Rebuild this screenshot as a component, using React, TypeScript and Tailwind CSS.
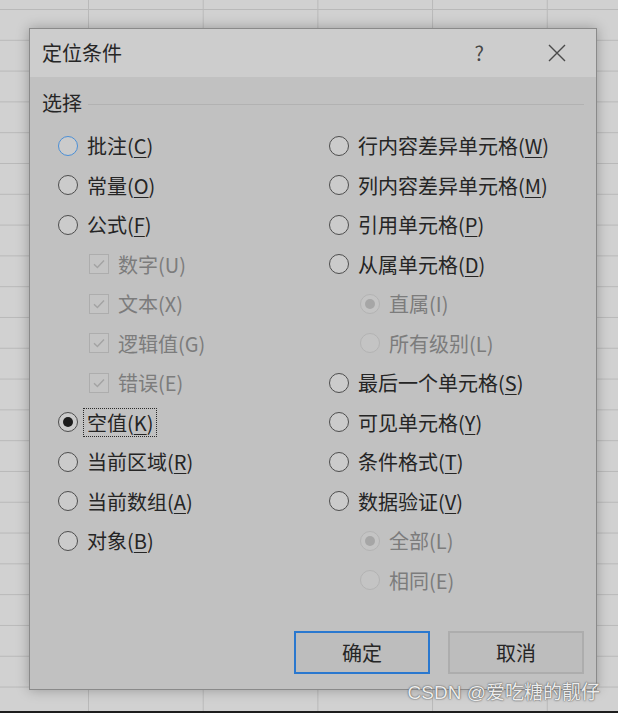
import React from 'react';

const FONT = '"Noto Sans CJK SC", "Noto Sans", sans-serif';

type Item = {
  label: string;
  key: string;
  kind: 'radio' | 'check';
  indent?: boolean;
  checked?: boolean;
  disabled?: boolean;
  hover?: boolean;
  focus?: boolean;
};

const leftItems: Item[] = [
  { label: '批注', key: 'C', kind: 'radio', hover: true },
  { label: '常量', key: 'O', kind: 'radio' },
  { label: '公式', key: 'F', kind: 'radio' },
  { label: '数字', key: 'U', kind: 'check', indent: true, checked: true, disabled: true },
  { label: '文本', key: 'X', kind: 'check', indent: true, checked: true, disabled: true },
  { label: '逻辑值', key: 'G', kind: 'check', indent: true, checked: true, disabled: true },
  { label: '错误', key: 'E', kind: 'check', indent: true, checked: true, disabled: true },
  { label: '空值', key: 'K', kind: 'radio', checked: true, focus: true },
  { label: '当前区域', key: 'R', kind: 'radio' },
  { label: '当前数组', key: 'A', kind: 'radio' },
  { label: '对象', key: 'B', kind: 'radio' },
];

const rightItems: Item[] = [
  { label: '行内容差异单元格', key: 'W', kind: 'radio' },
  { label: '列内容差异单元格', key: 'M', kind: 'radio' },
  { label: '引用单元格', key: 'P', kind: 'radio' },
  { label: '从属单元格', key: 'D', kind: 'radio' },
  { label: '直属', key: 'I', kind: 'radio', indent: true, checked: true, disabled: true },
  { label: '所有级别', key: 'L', kind: 'radio', indent: true, disabled: true },
  { label: '最后一个单元格', key: 'S', kind: 'radio' },
  { label: '可见单元格', key: 'Y', kind: 'radio' },
  { label: '条件格式', key: 'T', kind: 'radio' },
  { label: '数据验证', key: 'V', kind: 'radio' },
  { label: '全部', key: 'L', kind: 'radio', indent: true, checked: true, disabled: true },
  { label: '相同', key: 'E', kind: 'radio', indent: true, disabled: true },
];

function Radio({ checked, disabled, hover }: { checked?: boolean; disabled?: boolean; hover?: boolean }) {
  const border = disabled ? 'border-[#b3b3b3] bg-[#c4c4c4]' : hover ? 'border-[#4b8fd6] bg-[#cbcbcb]' : 'border-[#4d4d4d] bg-[#cbcbcb]';
  return (
    <span className={`w-[20px] h-[20px] rounded-full border-[1.5px] flex items-center justify-center shrink-0 ${border}`}>
      {checked && (
        <span className={`w-[10px] h-[10px] rounded-full ${disabled ? 'bg-[#a6a6a6]' : 'bg-[#1c1c1c]'}`} />
      )}
    </span>
  );
}

function Check({ checked }: { checked?: boolean }) {
  return (
    <span className="w-[20px] h-[20px] border border-[#adadad] bg-[#c4c4c4] flex items-center justify-center shrink-0">
      {checked && (
        <svg width="14" height="14" viewBox="0 0 14 14">
          <path d="M2 7.2 L5.4 10.6 L12 3.6" fill="none" stroke="#a3a3a3" strokeWidth="1.4" />
        </svg>
      )}
    </span>
  );
}

function Row({ item }: { item: Item }) {
  return (
    <div className={`h-[39.5px] flex items-center gap-[5px] ${item.indent ? 'pl-[31px]' : ''}`}>
      {item.kind === 'radio' ? (
        <Radio checked={item.checked} disabled={item.disabled} hover={item.hover} />
      ) : (
        <Check checked={item.checked} />
      )}
      <span
        className={`px-[3px] leading-[27px] border ${
          item.focus ? 'border-dotted border-[#2a2a2a]' : 'border-transparent'
        } ${item.disabled ? 'text-[#7c7c7c]' : 'text-[#252525]'}`}
      >
        {item.label}(
        {item.disabled ? item.key : <span className="underline underline-offset-[3px] decoration-1">{item.key}</span>})
      </span>
    </div>
  );
}

export default function App() {
  return (
    <div className="w-[618px] h-[713px] flex flex-col overflow-hidden" style={{ fontFamily: FONT }}>
      <div className="relative h-[711px] bg-[#d1d1d1] bg-[linear-gradient(to_right,#b9b9b9_1px,transparent_1px),linear-gradient(to_bottom,#b9b9b9_1px,transparent_1px)] bg-[size:114.7px_30.8px] bg-[position:88px_9px]">
        {/* dialog */}
        <div className="absolute left-[29px] top-[28px] w-[568px] h-[662px] border border-[#8a8a8a] bg-[#c1c1c1] flex flex-col shadow-[0_0_12px_rgba(0,0,0,0.28)]">
          <div className="h-[48px] bg-[#cdcdcd] flex items-center pl-[12px] text-[20px] text-[#262626]">
            <span>定位条件</span>
            <span className="ml-auto mr-[64px] text-[#474747]">?</span>
            <svg width="18" height="18" viewBox="0 0 18 18" className="mr-[30px]">
              <path d="M1 1 L17 17 M17 1 L1 17" stroke="#4a4a4a" strokeWidth="1.4" />
            </svg>
          </div>

          <div className="flex-1 flex flex-col text-[20px]">
            <div className="mt-[13px] h-[26px] flex items-center gap-[6px] pl-[12px] pr-[12px] text-[#262626]">
              <span>选择</span>
              <span className="flex-1 h-[1px] bg-[#b2b2b2] mt-[2px]" />
            </div>

            <div className="mt-[10px] grid grid-cols-[271px_1fr] pl-[28px]">
              <div className="flex flex-col">
                {leftItems.map((it) => (
                  <Row key={it.label} item={it} />
                ))}
              </div>
              <div className="flex flex-col">
                {rightItems.map((it) => (
                  <Row key={it.label} item={it} />
                ))}
              </div>
            </div>

            <div className="mt-auto mb-[15px] mr-[12px] flex justify-end gap-[18px]">
              <button className="w-[136px] h-[43px] border-2 border-[#2a78cf] bg-[#bdbdbd] text-[20px] text-[#262626]">
                确定
              </button>
              <button className="w-[136px] h-[43px] border-2 border-[#adadad] bg-[#bdbdbd] text-[20px] text-[#262626]">
                取消
              </button>
            </div>
          </div>
        </div>

        {/* watermark */}
        <div className="absolute right-[18px] top-[681px] text-[19px] leading-[24px] text-[#ececec] [text-shadow:0_0_1px_#555,0_0_2px_#666]" style={{ fontFamily: '"Liberation Sans", "Noto Sans CJK SC", sans-serif' }}>
          CSDN @爱吃糖的靓仔
        </div>
      </div>
      <div className="h-[2px] bg-[#1e1e1e]" />
    </div>
  );
}
